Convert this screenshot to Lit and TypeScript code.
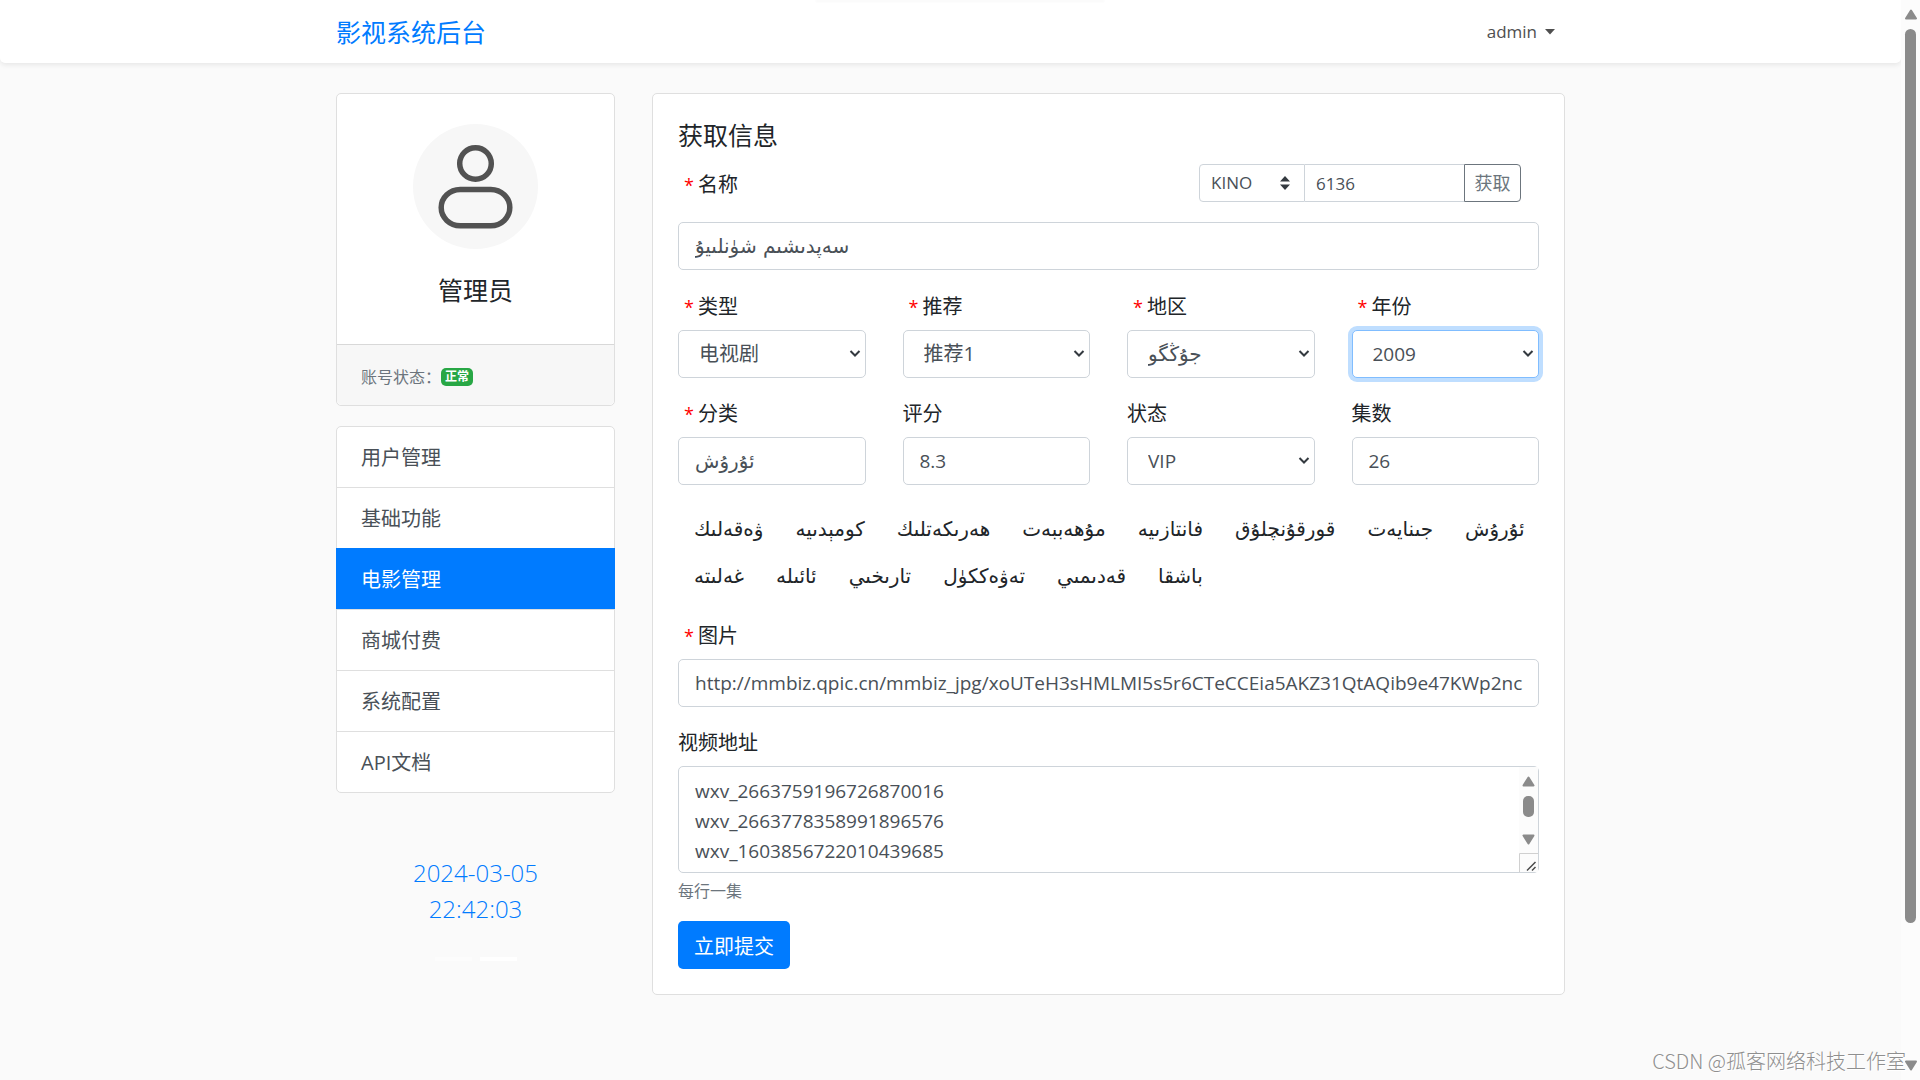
import { LitElement, html, css, svg, nothing } from "lit";
import { customElement, state } from "lit/decorators.js";

const MENU = ["用户管理", "基础功能", "电影管理", "商城付费", "系统配置", "API文档"];

const GENRES = [
  "ۋەقەلىك", "كومېدىيە", "ھەرىكەتلىك", "مۇھەببەت", "فانتازىيە", "قورقۇنچلۇق", "جىنايەت", "ئۇرۇش",
  "غەلىتە", "ئائىلە", "تارىخىي", "تەۋەككۈل", "قەدىمىي", "باشقا",
];

interface Field {
  id: string;
  label: string;
  value: string;
  required?: boolean;
  select?: boolean;
  focused?: boolean;
  uyghur?: boolean;
}

const FIELDS: Field[] = [
  { id: "type", label: "类型", value: "电视剧", required: true, select: true },
  { id: "recommend", label: "推荐", value: "推荐1", required: true, select: true },
  { id: "region", label: "地区", value: "جۇڭگو", required: true, select: true, uyghur: true },
  { id: "year", label: "年份", value: "2009", required: true, select: true, focused: true },
  { id: "genre", label: "分类", value: "ئۇرۇش", required: true, uyghur: true },
  { id: "score", label: "评分", value: "8.3" },
  { id: "status", label: "状态", value: "VIP", select: true },
  { id: "episodes", label: "集数", value: "26" },
];

const arrowUp = svg`<path d="M6 1.5 L11 9.5 H1 Z" fill="#8b8b8b" stroke="#8b8b8b" stroke-width="2" stroke-linejoin="round"/>`;
const arrowDown = svg`<path d="M1 1.5 H11 L6 9.5 Z" fill="#8b8b8b" stroke="#8b8b8b" stroke-width="2" stroke-linejoin="round"/>`;

@customElement("app-root")
export class AppRoot extends LitElement {
  @state() private active = "电影管理";

  static styles = css`
    :host {
      display: block;
      position: relative;
      min-height: 100vh;
      background: #fafafa;
      color: #212529;
      font-family: "Open Sans", "Noto Sans CJK SC", "DejaVu Sans", sans-serif;
      font-size: 20px;
      line-height: 30px;
    }
    *, *::before, *::after { box-sizing: border-box; }
    .shell { display: grid; grid-template-columns: minmax(0, 1fr) 19px; min-height: 100vh; }
    .container { width: 100%; max-width: 1269px; margin: 0 auto; padding: 0 20px; }

    .navbar {
      background: #fff;
      border-radius: 0 0 5px 5px;
      box-shadow: 0 2px 5px rgba(0, 0, 0, 0.08);
      padding: 14px 0 13px;
    }
    .nav-row { display: flex; align-items: center; justify-content: space-between; height: 36px; }
    .brand { color: #007bff; font-size: 25px; line-height: 36px; text-decoration: none; }
    .user {
      display: flex; align-items: center; gap: 8px;
      margin-right: 10px; padding: 0; border: 0; background: none;
      color: #4f4f4f; font: inherit; font-size: 17px; line-height: 24px;
    }

    .columns { display: grid; grid-template-columns: 279px minmax(0, 1fr); gap: 37px; align-items: start; padding-top: 30px; }
    .card, .menu { background: #fff; border: 1px solid #dfdfdf; border-radius: 5px; }

    .profile { display: flex; flex-direction: column; align-items: center; padding: 30px 20px 35px; gap: 23px; }
    .avatar { display: block; width: 125px; height: 125px; }
    .role { margin: 0; font-size: 25px; line-height: 37px; font-weight: 400; }
    .account {
      display: flex; align-items: center; padding: 17px 24px 13px;
      border-top: 1px solid #d8d8d8; border-radius: 0 0 5px 5px;
      background: #f7f7f7; color: #6c757d; font-size: 16px;
    }
    .badge { padding: 0 4px; border-radius: 5px; background: #28a745; color: #fff; font-size: 12px; line-height: 18px; font-weight: 700; }

    .menu { display: flex; flex-direction: column; margin-top: 20px; }
    .menu-item { padding: 16px 24px 14px; color: #495057; line-height: 30px; text-decoration: none; border-top: 1px solid #dfdfdf; }
    .menu-item:first-child { border-top: 0; }
    .menu-item.active { margin: 0 -1px; padding: 16px 25px 14px; background: #007bff; border-color: #007bff; color: #fff; }

    .clock { display: flex; flex-direction: column; align-items: center; margin-top: 62px; color: #007bff; font-size: 24px; line-height: 36px; font-weight: 300; }
    .dots { display: flex; justify-content: center; gap: 8px; margin-top: 30px; }
    .dot { width: 37px; height: 4px; padding: 0; border: 0; background: #fcfcfc; }
    .dot.on { background: #fff; }

    .editor { padding: 23px 25px 25px; }
    .title { margin: 0 0 11px; font-size: 25px; line-height: 36px; font-weight: 400; }
    .name-row { display: flex; align-items: center; justify-content: space-between; margin-bottom: 20px; }
    .label { display: block; padding-top: 2px; margin-bottom: 8px; }
    .name-row .label { padding-top: 4px; margin-bottom: 0; }
    .required::before { content: "*"; margin: 0 4px 0 6px; color: #f00; font-size: 18px; }

    .fetch { display: grid; grid-template-columns: 106px 159px 57px; margin-right: 18px; }
    .fetch .control { height: 38px; padding: 0 11px; font-size: 17px; border-radius: 0; }
    .fetch .source .control { border-radius: 4px 0 0 4px; }
    .fetch .code { border-left: 0; border-right: 0; }
    .fetch-button { padding: 0; border: 1px solid #6c757d; border-radius: 0 4px 4px 0; background: #fff; color: #6c757d; font: inherit; font-size: 18px; }

    .control {
      display: block; width: 100%; height: 48px; margin: 0; padding: 0 14px 0 16px;
      border: 1px solid #ced4da; border-radius: 5px; outline: 0;
      background: #fff; color: #495057;
      font-family: inherit; font-size: 19px; line-height: 30px; appearance: none;
    }
    .picker { display: grid; align-items: center; }
    .picker > * { grid-area: 1 / 1; }
    .picker .control { padding-left: 20px; }
    .fetch .picker .control { padding-left: 11px; }
    .chevron { justify-self: end; margin-right: 4px; pointer-events: none; }
    .fetch .chevron { margin-right: 15px; }
    .cjk { font-size: 20px; }
    .uyghur { font-family: "DejaVu Sans", sans-serif; font-size: 20px; }
    .focused { border-color: #80bdff; box-shadow: 0 0 0 4px #bfdeff; }

    .fields { display: grid; grid-template-columns: repeat(4, minmax(0, 1fr)); gap: 19px 37px; margin: 20px 0; }
    .genres { display: flex; flex-wrap: wrap; margin: 0 -10px 20px 0; }
    .genre { height: 47px; padding: 0 16px; border: 0; background: none; color: #212529; font-family: "DejaVu Sans", sans-serif; font-size: 20px; line-height: 30px; }
    .group { margin-bottom: 19px; }

    .area { position: relative; }
    .area .control { height: 107px; padding: 9px 14px 7px 16px; overflow: hidden; resize: none; }
    .area-bar { position: absolute; top: 1px; right: 1px; }
    .help { margin: 4px 0 16px; color: #6c757d; font-size: 16px; line-height: 28px; }
    .submit { display: block; height: 48px; padding: 3px 16px 0; border: 0; border-radius: 5px; background: #007bff; color: #fff; font: inherit; }

    .scrollbar { display: flex; flex-direction: column; align-items: center; height: 100vh; padding: 9px 0; background: #fcfcfc; }
    .thumb { width: 11px; margin: 9px 0 0; flex: 0 0 calc(100% - 168px); border-radius: 6px; background: #8b8b8b; }
    .scrollbar .down { margin-top: auto; }
    .tab-shadow { position: absolute; top: 0; left: 42.5%; width: 15%; height: 2px; background: #f8f8f8; filter: blur(1px); }
    .watermark { position: absolute; right: 14px; bottom: 4px; color: #8f8f8f; font-family: "Noto Sans CJK SC", sans-serif; font-weight: 300; font-size: 20px; line-height: 30px; text-shadow: 1px 1px 0 #fff; }
  `;

  private renderSelect(f: Field) {
    const cls = `control ${f.uyghur ? "uyghur" : /[\u4e00-\u9fff]/.test(f.value) ? "cjk" : ""} ${f.focused ? "focused" : ""}`;
    return html`<div class="picker">
      <select class=${cls} id=${f.id}><option>${f.value}</option></select>
      <svg class="chevron" width="14" height="10" viewBox="0 0 14 10" aria-hidden="true">
        <path d="M2.500 2 L7 6.500 L11.500 2" fill="none" stroke="#343a40" stroke-width="2"/>
      </svg>
    </div>`;
  }

  private renderField(f: Field) {
    return html`<div class="field">
      <label class="label ${f.required ? "required" : ""}" for=${f.id}>${f.label}</label>
      ${f.select
        ? this.renderSelect(f)
        : html`<input class="control ${f.uyghur ? "uyghur" : ""}" id=${f.id} .value=${f.value} />`}
    </div>`;
  }

  render() {
    return html`
      <div class="shell">
        <div class="page">
          <header class="navbar">
            <div class="container nav-row">
              <a class="brand" href="#">影视系统后台</a>
              <button class="user" type="button">admin
                <svg width="10" height="6" viewBox="0 0 10 6" aria-hidden="true"><path d="M0 0 H10 L5 5.500 Z" fill="#4f4f4f"/></svg>
              </button>
            </div>
          </header>
          <div class="container columns">
            <aside>
              <section class="card">
                <div class="profile">
                  <svg class="avatar" viewBox="0 0 125 125" aria-hidden="true">
                    <circle cx="62.5" cy="62.5" r="62.5" fill="#f7f7f7"/>
                    <g fill="none" stroke="#525252" stroke-width="5.500">
                      <circle cx="62.5" cy="39.500" r="15.8"/>
                      <rect x="28.2" y="65.500" width="68.6" height="36.200" rx="19" ry="18.100"/>
                    </g>
                  </svg>
                  <h2 class="role">管理员</h2>
                </div>
                <div class="account">账号状态：<span class="badge">正常</span></div>
              </section>
              <nav class="menu">
                ${MENU.map((m) => html`<a
                  class="menu-item ${m === this.active ? "active" : ""}"
                  href="#" aria-current=${m === this.active ? "page" : nothing}
                  @click=${() => (this.active = m)}>${m}</a>`)}
              </nav>
              <div class="clock"><span>2024-03-05</span><span>22:42:03</span></div>
              <div class="dots">
                <button class="dot" type="button" aria-label="1"></button>
                <button class="dot on" type="button" aria-label="2"></button>
              </div>
            </aside>
            <form class="card editor" @submit=${(e: Event) => e.preventDefault()}>
              <h1 class="title">获取信息</h1>
              <div class="name-row">
                <label class="label required" for="name">名称</label>
                <div class="fetch">
                  <div class="picker source">
                    <select class="control" aria-label="KINO"><option>KINO</option></select>
                    <svg class="chevron" width="10" height="14" viewBox="0 0 10 14" aria-hidden="true">
                      <path d="M0 5.500 L5 0 L10 5.500 Z M0 8.500 H10 L5 14 Z" fill="#343a40"/>
                    </svg>
                  </div>
                  <input class="control code" aria-label="6136" .value=${"6136"} />
                  <button class="fetch-button" type="button">获取</button>
                </div>
              </div>
              <input class="control uyghur" id="name" .value=${"سەپدىشىم شۈنلىيۇ"} />
              <div class="fields">${FIELDS.map((f) => this.renderField(f))}</div>
              <div class="genres">
                ${GENRES.map((g) => html`<button class="genre" type="button" lang="ug">${g}</button>`)}
              </div>
              <div class="group">
                <label class="label required" for="picture">图片</label>
                <input class="control" id="picture" .value=${"http://mmbiz.qpic.cn/mmbiz_jpg/xoUTeH3sHMLMI5s5r6CTeCCEia5AKZ31QtAQib9e47KWp2nc"} />
              </div>
              <label class="label" for="videos">视频地址</label>
              <div class="area">
                <textarea class="control" id="videos" rows="3" .value=${"wxv_2663759196726870016\nwxv_2663778358991896576\nwxv_1603856722010439685"}></textarea>
                <svg class="area-bar" width="19" height="105" viewBox="0 0 19 105" aria-hidden="true">
                  <rect width="19" height="105" fill="#fcfcfc"/>
                  <g transform="translate(3.500 9)">${arrowUp}</g>
                  <rect x="4" y="29" width="11" height="21" rx="5" fill="#8b8b8b"/>
                  <g transform="translate(3.500 67)">${arrowDown}</g>
                  <path d="M0.500 105 V86.500 H19" fill="none" stroke="#d0d0d0"/>
                  <path d="M8 103.500 L16.500 95 M13 103.500 L16.500 100" stroke="#4a4a4a" stroke-width="1.500"/>
                </svg>
              </div>
              <p class="help">每行一集</p>
              <button class="submit" type="submit">立即提交</button>
            </form>
          </div>
        </div>
        <div class="scrollbar" aria-hidden="true">
          <svg width="12" height="11" viewBox="0 0 12 11">${arrowUp}</svg>
          <div class="thumb"></div>
          <svg class="down" width="12" height="11" viewBox="0 0 12 11">${arrowDown}</svg>
        </div>
      </div>
      <div class="tab-shadow"></div>
      <div class="watermark">CSDN @孤客网络科技工作室</div>
    `;
  }
}
